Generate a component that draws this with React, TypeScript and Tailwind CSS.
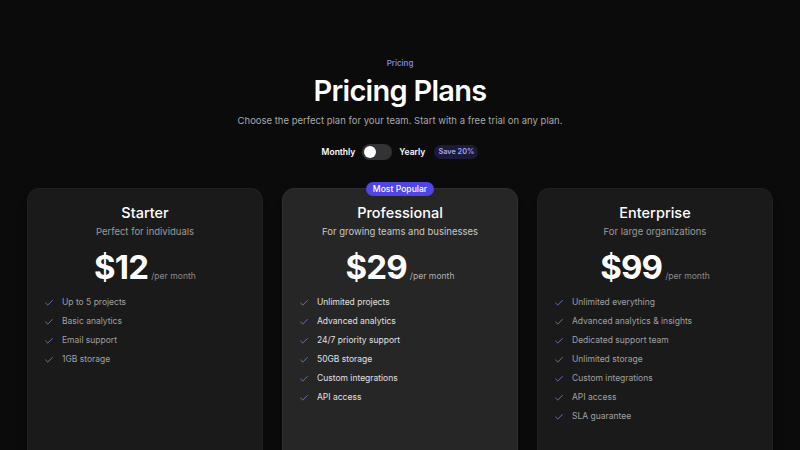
import { Check } from 'lucide-react';

type Plan = {
  name: string;
  desc: string;
  price: string;
  features: string[];
  popular?: boolean;
};

const plans: Plan[] = [
  {
    name: 'Starter',
    desc: 'Perfect for individuals',
    price: '$12',
    features: ['Up to 5 projects', 'Basic analytics', 'Email support', '1GB storage'],
  },
  {
    name: 'Professional',
    desc: 'For growing teams and businesses',
    price: '$29',
    popular: true,
    features: [
      'Unlimited projects',
      'Advanced analytics',
      '24/7 priority support',
      '50GB storage',
      'Custom integrations',
      'API access',
    ],
  },
  {
    name: 'Enterprise',
    desc: 'For large organizations',
    price: '$99',
    features: [
      'Unlimited everything',
      'Advanced analytics & insights',
      'Dedicated support team',
      'Unlimited storage',
      'Custom integrations',
      'API access',
      'SLA guarantee',
    ],
  },
];

const PlanCard = ({ plan }: { plan: Plan }) => {
  return (
    <div
      className={
        plan.popular
          ? 'relative h-[300px] rounded-xl bg-[#262626] border border-[#2e2e2e] shadow-lg px-[16px] pt-[12px]'
          : 'relative h-[300px] rounded-xl bg-[#1a1a1a] border border-[#202020] shadow-lg px-[16px] pt-[12px]'
      }
    >
      {plan.popular && (
        <div className="absolute -top-[7px] left-1/2 -translate-x-1/2 rounded-full bg-[#4f46e5] w-[68px] h-[14px] flex items-center justify-center text-[8.6px] font-medium leading-none text-white whitespace-nowrap">
          Most Popular
        </div>
      )}
      <div className="text-center">
        <h3 className="text-[14.5px] leading-6 font-medium text-white">{plan.name}</h3>
        <p className={plan.popular ? 'text-[9.5px] leading-[14px] text-[#c8c8c8]' : 'text-[9.5px] leading-[14px] text-[#9a9a9a]'}>
          {plan.desc}
        </p>
        <div className="mt-[10px] flex items-baseline justify-center gap-[3px]">
          <span className="text-[33px] leading-9 font-bold text-white tracking-tight">{plan.price}</span>
          <span className={plan.popular ? 'text-[8.6px] text-[#b0b0b0]' : 'text-[8.6px] text-[#8a8a8a]'}>/per month</span>
        </div>
      </div>
      <ul className="mt-[8px]">
        {plan.features.map((f) => (
          <li key={f} className="flex items-center h-[19px] gap-[8px]">
            <Check className="w-[10px] h-[10px] text-[#7b7fc9]" strokeWidth={2} />
            <span className={plan.popular ? 'text-[8.5px] text-[#e0e0e0]' : 'text-[8.5px] text-[#a0a0a0]'}>{f}</span>
          </li>
        ))}
      </ul>
    </div>
  );
};

const App = () => {
  return (
    <div className="h-[450px] overflow-hidden bg-[#0b0b0b] font-['Inter',sans-serif]">
      <div className="pt-[55px] text-center">
        <div className="text-[8px] leading-4 font-medium text-[#8b8ff0]">Pricing</div>
        <h1 className="mt-[2px] text-[29px] leading-9 font-semibold text-white tracking-tight">Pricing Plans</h1>
        <p className="mt-[2px] text-[9.5px] leading-5 text-[#a8a8a8]">
          Choose the perfect plan for your team. Start with a free trial on any plan.
        </p>
        <div className="mt-[13px] flex items-center justify-center h-4 text-[8.5px] font-semibold text-white">
          <span>Monthly</span>
          <div className="ml-[7px] w-[30px] h-[16px] rounded-full bg-[#333336] flex items-center px-[2px]">
            <div className="w-[12px] h-[12px] rounded-full bg-white" />
          </div>
          <span className="ml-[7px]">Yearly</span>
          <span className="ml-[9px] rounded-full bg-[#1b1a3a] w-[44px] h-[14px] flex items-center justify-center text-[7.3px] font-semibold text-[#a5a8f5]">
            Save 20%
          </span>
        </div>
      </div>
      <div className="mt-[28px] grid grid-cols-3 gap-[19px] px-[27px]">
        {plans.map((p) => (
          <PlanCard key={p.name} plan={p} />
        ))}
      </div>
    </div>
  );
};

export default App;
